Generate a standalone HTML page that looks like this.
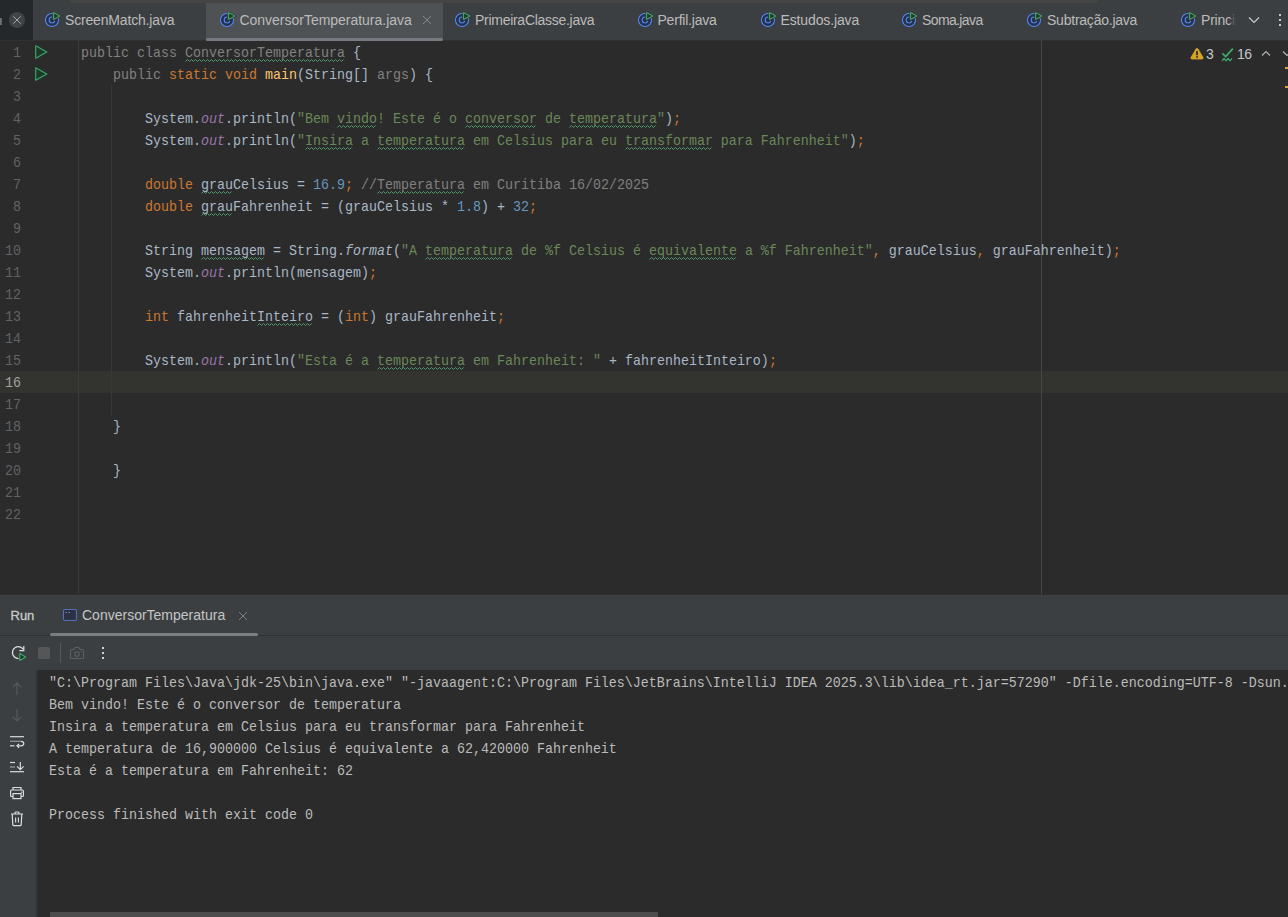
<!DOCTYPE html>
<html><head><meta charset="utf-8">
<style>
*{margin:0;padding:0;box-sizing:border-box}
html,body{width:1288px;height:917px;overflow:hidden;background:#2b2b2b}
body{position:relative;font-family:"Liberation Sans",sans-serif}
.a{position:absolute}
.tab{position:absolute;top:0;height:40px;font-size:14px;color:#bbbbbb;line-height:40px;white-space:nowrap}
.code{position:absolute;left:0;width:1288px;height:22px;font-family:"Liberation Mono",monospace;font-size:13.33px;line-height:22px;white-space:pre;color:#a9b7c6}
.ln{position:absolute;left:0;width:21px;text-align:right;color:#606366;transform:translateY(2px) scaleY(1.11);transform-origin:0 14.5px}
.tx{position:absolute;left:81px;top:0;transform:translateY(2px) scaleY(1.11);transform-origin:0 14.5px}
.k{color:#cc7832}.s{color:#6a8759}.n{color:#6897bb}.c{color:#808080}.f{color:#9876aa;font-style:italic}.m{color:#ffc66d}.g{color:#808080}
.i{font-style:italic}
.con{position:absolute;left:49px;font-family:"Liberation Mono",monospace;font-size:13.33px;line-height:22px;white-space:pre;color:#bbbbbb;transform:translateY(2px) scaleY(1.11);transform-origin:0 14.5px}
</style></head><body>

<div class="a" style="left:0;top:0;width:33px;height:40px;background:#25282a"></div>
<div class="a" style="left:33px;top:0;width:1255px;height:40px;background:#3c3f41"></div>
<div class="a" style="left:0;top:40px;width:1288px;height:554px;background:#2b2b2b"></div>
<div class="a" style="left:0;top:40px;width:1288px;height:1px;background:#32312e"></div>
<div class="a" style="left:70px;top:0;width:1028px;height:3px;background:#454643"></div>
<svg class="a" style="left:0;top:0" width="33" height="40"><circle cx="17" cy="20" r="8" fill="#414446"/><path d="M13.3 16.3 L20.7 23.7 M20.7 16.3 L13.3 23.7" stroke="#a3a5a7" stroke-width="1"/><rect x="0" y="18" width="1.8" height="7" fill="#7f8486" opacity="0.8"/></svg>
<div class="a" style="left:206px;top:3px;width:237px;height:37px;background:#4e5254"></div>
<div class="a" style="left:206px;top:38px;width:237px;height:3px;border-radius:1.5px;background:#747a80"></div>
<svg class="a" style="left:44px;top:12px" width="17" height="17"><circle cx="8" cy="8" r="6.55" fill="#26304a" stroke="#548af7" stroke-width="1.05"/><path d="M8 5.1 A2.9 2.9 0 1 0 10.8 9" fill="none" stroke="#548af7" stroke-width="1.05"/><path d="M9.5 0.3 L16.2 4 L9.5 7.7 Z" fill="#3c3f41" stroke="#3c3f41" stroke-width="2" stroke-linejoin="round"/><path d="M9.6 0.6 L15.8 4 L9.6 7.4 Z" fill="#1f3b29" stroke="#45b56e" stroke-width="1" stroke-linejoin="round"/></svg>
<div class="tab" style="left:65px;letter-spacing:-0.17px">ScreenMatch.java</div>
<svg class="a" style="left:218.5px;top:12px" width="17" height="17"><circle cx="8" cy="8" r="6.55" fill="#26304a" stroke="#548af7" stroke-width="1.05"/><path d="M8 5.1 A2.9 2.9 0 1 0 10.8 9" fill="none" stroke="#548af7" stroke-width="1.05"/><path d="M9.5 0.3 L16.2 4 L9.5 7.7 Z" fill="#3c3f41" stroke="#3c3f41" stroke-width="2" stroke-linejoin="round"/><path d="M9.6 0.6 L15.8 4 L9.6 7.4 Z" fill="#1f3b29" stroke="#45b56e" stroke-width="1" stroke-linejoin="round"/></svg>
<div class="tab" style="left:239.5px;letter-spacing:-0.02px">ConversorTemperatura.java</div>
<svg class="a" style="left:454px;top:12px" width="17" height="17"><circle cx="8" cy="8" r="6.55" fill="#26304a" stroke="#548af7" stroke-width="1.05"/><path d="M8 5.1 A2.9 2.9 0 1 0 10.8 9" fill="none" stroke="#548af7" stroke-width="1.05"/><path d="M9.5 0.3 L16.2 4 L9.5 7.7 Z" fill="#3c3f41" stroke="#3c3f41" stroke-width="2" stroke-linejoin="round"/><path d="M9.6 0.6 L15.8 4 L9.6 7.4 Z" fill="#1f3b29" stroke="#45b56e" stroke-width="1" stroke-linejoin="round"/></svg>
<div class="tab" style="left:475px;letter-spacing:-0.28px">PrimeiraClasse.java</div>
<svg class="a" style="left:636.5px;top:12px" width="17" height="17"><circle cx="8" cy="8" r="6.55" fill="#26304a" stroke="#548af7" stroke-width="1.05"/><path d="M8 5.1 A2.9 2.9 0 1 0 10.8 9" fill="none" stroke="#548af7" stroke-width="1.05"/><path d="M9.5 0.3 L16.2 4 L9.5 7.7 Z" fill="#3c3f41" stroke="#3c3f41" stroke-width="2" stroke-linejoin="round"/><path d="M9.6 0.6 L15.8 4 L9.6 7.4 Z" fill="#1f3b29" stroke="#45b56e" stroke-width="1" stroke-linejoin="round"/></svg>
<div class="tab" style="left:657.5px;letter-spacing:-0.22px">Perfil.java</div>
<svg class="a" style="left:759.5px;top:12px" width="17" height="17"><circle cx="8" cy="8" r="6.55" fill="#26304a" stroke="#548af7" stroke-width="1.05"/><path d="M8 5.1 A2.9 2.9 0 1 0 10.8 9" fill="none" stroke="#548af7" stroke-width="1.05"/><path d="M9.5 0.3 L16.2 4 L9.5 7.7 Z" fill="#3c3f41" stroke="#3c3f41" stroke-width="2" stroke-linejoin="round"/><path d="M9.6 0.6 L15.8 4 L9.6 7.4 Z" fill="#1f3b29" stroke="#45b56e" stroke-width="1" stroke-linejoin="round"/></svg>
<div class="tab" style="left:780.5px;letter-spacing:-0.13px">Estudos.java</div>
<svg class="a" style="left:901px;top:12px" width="17" height="17"><circle cx="8" cy="8" r="6.55" fill="#26304a" stroke="#548af7" stroke-width="1.05"/><path d="M8 5.1 A2.9 2.9 0 1 0 10.8 9" fill="none" stroke="#548af7" stroke-width="1.05"/><path d="M9.5 0.3 L16.2 4 L9.5 7.7 Z" fill="#3c3f41" stroke="#3c3f41" stroke-width="2" stroke-linejoin="round"/><path d="M9.6 0.6 L15.8 4 L9.6 7.4 Z" fill="#1f3b29" stroke="#45b56e" stroke-width="1" stroke-linejoin="round"/></svg>
<div class="tab" style="left:922px;letter-spacing:-0.62px">Soma.java</div>
<svg class="a" style="left:1026px;top:12px" width="17" height="17"><circle cx="8" cy="8" r="6.55" fill="#26304a" stroke="#548af7" stroke-width="1.05"/><path d="M8 5.1 A2.9 2.9 0 1 0 10.8 9" fill="none" stroke="#548af7" stroke-width="1.05"/><path d="M9.5 0.3 L16.2 4 L9.5 7.7 Z" fill="#3c3f41" stroke="#3c3f41" stroke-width="2" stroke-linejoin="round"/><path d="M9.6 0.6 L15.8 4 L9.6 7.4 Z" fill="#1f3b29" stroke="#45b56e" stroke-width="1" stroke-linejoin="round"/></svg>
<div class="tab" style="left:1047px;letter-spacing:-0.23px">Subtração.java</div>
<svg class="a" style="left:1180px;top:12px" width="17" height="17"><circle cx="8" cy="8" r="6.55" fill="#26304a" stroke="#548af7" stroke-width="1.05"/><path d="M8 5.1 A2.9 2.9 0 1 0 10.8 9" fill="none" stroke="#548af7" stroke-width="1.05"/><path d="M9.5 0.3 L16.2 4 L9.5 7.7 Z" fill="#3c3f41" stroke="#3c3f41" stroke-width="2" stroke-linejoin="round"/><path d="M9.6 0.6 L15.8 4 L9.6 7.4 Z" fill="#1f3b29" stroke="#45b56e" stroke-width="1" stroke-linejoin="round"/></svg>
<div class="tab" style="left:1201px;letter-spacing:-0.2px">Princip</div>
<svg class="a" style="left:422px;top:15px" width="10" height="10"><path d="M1 1 L9 9 M9 1 L1 9" stroke="#85888a" stroke-width="1"/></svg>
<div class="a" style="left:1230px;top:3px;width:6px;height:37px;background:linear-gradient(to right, rgba(60,63,65,0.3), #3c3f41)"></div>
<div class="a" style="left:1236px;top:3px;width:52px;height:37px;background:#3c3f41"></div>
<svg class="a" style="left:1246px;top:14px" width="16" height="12"><path d="M3 3.5 L8 8.5 L13 3.5" fill="none" stroke="#c9cacb" stroke-width="1.2"/></svg>
<svg class="a" style="left:1276px;top:12px" width="8" height="16"><rect x="3" y="2" width="2" height="2" fill="#c9cacb"/><rect x="3" y="7" width="2" height="2" fill="#c9cacb"/><rect x="3" y="12" width="2" height="2" fill="#c9cacb"/></svg>
<div class="a" style="left:0;top:371px;width:1288px;height:22px;background:#33332f"></div>
<div class="a" style="left:78px;top:40px;width:1px;height:554px;background:#3a3a3a"></div>
<div class="a" style="left:1041px;top:40px;width:1px;height:554px;background:#474747"></div>
<div class="a" style="left:111px;top:85px;width:1px;height:330px;background:#373737"></div>
<div class="code" style="top:41px"><span class="ln">1</span><span class="tx"><span class="g">public class ConversorTemperatura</span> {</span></div>
<div class="code" style="top:63px"><span class="ln">2</span><span class="tx">    <span class="g">public</span> <span class="k">static</span> <span class="k">void</span> <span class="m">main</span>(String[] <span class="g">args</span>) {</span></div>
<div class="code" style="top:85px"><span class="ln">3</span><span class="tx"></span></div>
<div class="code" style="top:107px"><span class="ln">4</span><span class="tx">        System.<span class="f">out</span>.println(<span class="s">&quot;Bem vindo! Este é o conversor de temperatura&quot;</span>)<span class="k">;</span></span></div>
<div class="code" style="top:129px"><span class="ln">5</span><span class="tx">        System.<span class="f">out</span>.println(<span class="s">&quot;Insira a temperatura em Celsius para eu transformar para Fahrenheit&quot;</span>)<span class="k">;</span></span></div>
<div class="code" style="top:151px"><span class="ln">6</span><span class="tx"></span></div>
<div class="code" style="top:173px"><span class="ln">7</span><span class="tx">        <span class="k">double</span> grauCelsius = <span class="n">16.9</span><span class="k">;</span><span class="c"> //Temperatura em Curitiba 16/02/2025</span></span></div>
<div class="code" style="top:195px"><span class="ln">8</span><span class="tx">        <span class="k">double</span> grauFahrenheit = (grauCelsius * <span class="n">1.8</span>) + <span class="n">32</span><span class="k">;</span></span></div>
<div class="code" style="top:217px"><span class="ln">9</span><span class="tx"></span></div>
<div class="code" style="top:239px"><span class="ln">10</span><span class="tx">        String mensagem = String.<span class="i">format</span>(<span class="s">&quot;A temperatura de %f Celsius é equivalente a %f Fahrenheit&quot;</span><span class="k">,</span> grauCelsius<span class="k">,</span> grauFahrenheit)<span class="k">;</span></span></div>
<div class="code" style="top:261px"><span class="ln">11</span><span class="tx">        System.<span class="f">out</span>.println(mensagem)<span class="k">;</span></span></div>
<div class="code" style="top:283px"><span class="ln">12</span><span class="tx"></span></div>
<div class="code" style="top:305px"><span class="ln">13</span><span class="tx">        <span class="k">int</span> fahrenheitInteiro = (<span class="k">int</span>) grauFahrenheit<span class="k">;</span></span></div>
<div class="code" style="top:327px"><span class="ln">14</span><span class="tx"></span></div>
<div class="code" style="top:349px"><span class="ln">15</span><span class="tx">        System.<span class="f">out</span>.println(<span class="s">&quot;Esta é a temperatura em Fahrenheit: &quot;</span> + fahrenheitInteiro)<span class="k">;</span></span></div>
<div class="code" style="top:371px"><span class="ln" style="color:#a4a3a3">16</span><span class="tx"></span></div>
<div class="code" style="top:393px"><span class="ln">17</span><span class="tx"></span></div>
<div class="code" style="top:415px"><span class="ln">18</span><span class="tx">    }</span></div>
<div class="code" style="top:437px"><span class="ln">19</span><span class="tx"></span></div>
<div class="code" style="top:459px"><span class="ln">20</span><span class="tx">    }</span></div>
<div class="code" style="top:481px"><span class="ln">21</span><span class="tx"></span></div>
<div class="code" style="top:503px"><span class="ln">22</span><span class="tx"></span></div>
<svg class="a" style="left:34px;top:44px" width="15" height="16"><path d="M1.7 1.8 L12.8 8 L1.7 14.2 Z" fill="#1c3a29" stroke="#3ca66a" stroke-width="1.15" stroke-linejoin="round"/></svg>
<svg class="a" style="left:34px;top:66px" width="15" height="16"><path d="M1.7 1.8 L12.8 8 L1.7 14.2 Z" fill="#1c3a29" stroke="#3ca66a" stroke-width="1.15" stroke-linejoin="round"/></svg>
<svg class="a" style="left:1189px;top:46px" width="16" height="15"><path d="M8 2.2 Q8.6 2.2 9 2.9 L14 11.4 Q14.6 12.9 13.2 13 L2.8 13 Q1.4 12.9 2 11.4 L7 2.9 Q7.4 2.2 8 2.2 Z" fill="#d4a52a" stroke="#d4a52a" stroke-width="0.8" stroke-linejoin="round"/><rect x="7.15" y="5" width="1.7" height="4.3" fill="#2b2b2b"/><rect x="7.15" y="10.2" width="1.7" height="1.6" fill="#2b2b2b"/></svg>
<div class="a" style="left:1206px;top:44px;font-size:14px;line-height:20px;color:#c4c6c8">3</div>
<svg class="a" style="left:1221px;top:47px" width="14" height="15"><path d="M1.4 6.4 L4.7 9.6 L11.8 1.6" fill="none" stroke="#3db06e" stroke-width="1.6"/><path d="M1 13.8 L3 11.4 L5 13.8 L7 11.4 L9 13.8 L11 11.4" fill="none" stroke="#3db06e" stroke-width="1.1"/></svg>
<div class="a" style="left:1237px;top:44px;font-size:14px;line-height:20px;letter-spacing:-0.6px;color:#c4c6c8">16</div>
<svg class="a" style="left:1260px;top:49px" width="12" height="9"><path d="M2 6.5 L6 2.5 L10 6.5" fill="none" stroke="#b4b6b8" stroke-width="1.1"/></svg>
<svg class="a" style="left:1281px;top:49px" width="7" height="9"><path d="M2 2.5 L6 6.5 L10 2.5" fill="none" stroke="#b4b6b8" stroke-width="1.1"/></svg>
<div class="a" style="left:1285px;top:67px;width:3px;height:2px;background:#d6a72a"></div>
<div class="a" style="left:1285px;top:86px;width:3px;height:2px;background:#d6a72a"></div>
<svg class="a" style="left:185.0px;top:58px" width="161.0" height="5"><polyline points="0.5,3.5 2.5,1.5 4.5,3.5 6.5,1.5 8.5,3.5 10.5,1.5 12.5,3.5 14.5,1.5 16.5,3.5 18.5,1.5 20.5,3.5 22.5,1.5 24.5,3.5 26.5,1.5 28.5,3.5 30.5,1.5 32.5,3.5 34.5,1.5 36.5,3.5 38.5,1.5 40.5,3.5 42.5,1.5 44.5,3.5 46.5,1.5 48.5,3.5 50.5,1.5 52.5,3.5 54.5,1.5 56.5,3.5 58.5,1.5 60.5,3.5 62.5,1.5 64.5,3.5 66.5,1.5 68.5,3.5 70.5,1.5 72.5,3.5 74.5,1.5 76.5,3.5 78.5,1.5 80.5,3.5 82.5,1.5 84.5,3.5 86.5,1.5 88.5,3.5 90.5,1.5 92.5,3.5 94.5,1.5 96.5,3.5 98.5,1.5 100.5,3.5 102.5,1.5 104.5,3.5 106.5,1.5 108.5,3.5 110.5,1.5 112.5,3.5 114.5,1.5 116.5,3.5 118.5,1.5 120.5,3.5 122.5,1.5 124.5,3.5 126.5,1.5 128.5,3.5 130.5,1.5 132.5,3.5 134.5,1.5 136.5,3.5 138.5,1.5 140.5,3.5 142.5,1.5 144.5,3.5 146.5,1.5 148.5,3.5 150.5,1.5 152.5,3.5 154.5,1.5 156.5,3.5 158.5,1.5" fill="none" stroke="#4f9c6c" stroke-width="1"/></svg>
<svg class="a" style="left:337.0px;top:124px" width="41.0" height="5"><polyline points="0.5,3.5 2.5,1.5 4.5,3.5 6.5,1.5 8.5,3.5 10.5,1.5 12.5,3.5 14.5,1.5 16.5,3.5 18.5,1.5 20.5,3.5 22.5,1.5 24.5,3.5 26.5,1.5 28.5,3.5 30.5,1.5 32.5,3.5 34.5,1.5 36.5,3.5 38.5,1.5" fill="none" stroke="#4f9c6c" stroke-width="1"/></svg>
<svg class="a" style="left:465.0px;top:124px" width="73.0" height="5"><polyline points="0.5,3.5 2.5,1.5 4.5,3.5 6.5,1.5 8.5,3.5 10.5,1.5 12.5,3.5 14.5,1.5 16.5,3.5 18.5,1.5 20.5,3.5 22.5,1.5 24.5,3.5 26.5,1.5 28.5,3.5 30.5,1.5 32.5,3.5 34.5,1.5 36.5,3.5 38.5,1.5 40.5,3.5 42.5,1.5 44.5,3.5 46.5,1.5 48.5,3.5 50.5,1.5 52.5,3.5 54.5,1.5 56.5,3.5 58.5,1.5 60.5,3.5 62.5,1.5 64.5,3.5 66.5,1.5 68.5,3.5 70.5,1.5" fill="none" stroke="#4f9c6c" stroke-width="1"/></svg>
<svg class="a" style="left:569.0px;top:124px" width="89.0" height="5"><polyline points="0.5,3.5 2.5,1.5 4.5,3.5 6.5,1.5 8.5,3.5 10.5,1.5 12.5,3.5 14.5,1.5 16.5,3.5 18.5,1.5 20.5,3.5 22.5,1.5 24.5,3.5 26.5,1.5 28.5,3.5 30.5,1.5 32.5,3.5 34.5,1.5 36.5,3.5 38.5,1.5 40.5,3.5 42.5,1.5 44.5,3.5 46.5,1.5 48.5,3.5 50.5,1.5 52.5,3.5 54.5,1.5 56.5,3.5 58.5,1.5 60.5,3.5 62.5,1.5 64.5,3.5 66.5,1.5 68.5,3.5 70.5,1.5 72.5,3.5 74.5,1.5 76.5,3.5 78.5,1.5 80.5,3.5 82.5,1.5 84.5,3.5 86.5,1.5" fill="none" stroke="#4f9c6c" stroke-width="1"/></svg>
<svg class="a" style="left:305.0px;top:146px" width="49.0" height="5"><polyline points="0.5,3.5 2.5,1.5 4.5,3.5 6.5,1.5 8.5,3.5 10.5,1.5 12.5,3.5 14.5,1.5 16.5,3.5 18.5,1.5 20.5,3.5 22.5,1.5 24.5,3.5 26.5,1.5 28.5,3.5 30.5,1.5 32.5,3.5 34.5,1.5 36.5,3.5 38.5,1.5 40.5,3.5 42.5,1.5 44.5,3.5 46.5,1.5" fill="none" stroke="#4f9c6c" stroke-width="1"/></svg>
<svg class="a" style="left:377.0px;top:146px" width="89.0" height="5"><polyline points="0.5,3.5 2.5,1.5 4.5,3.5 6.5,1.5 8.5,3.5 10.5,1.5 12.5,3.5 14.5,1.5 16.5,3.5 18.5,1.5 20.5,3.5 22.5,1.5 24.5,3.5 26.5,1.5 28.5,3.5 30.5,1.5 32.5,3.5 34.5,1.5 36.5,3.5 38.5,1.5 40.5,3.5 42.5,1.5 44.5,3.5 46.5,1.5 48.5,3.5 50.5,1.5 52.5,3.5 54.5,1.5 56.5,3.5 58.5,1.5 60.5,3.5 62.5,1.5 64.5,3.5 66.5,1.5 68.5,3.5 70.5,1.5 72.5,3.5 74.5,1.5 76.5,3.5 78.5,1.5 80.5,3.5 82.5,1.5 84.5,3.5 86.5,1.5" fill="none" stroke="#4f9c6c" stroke-width="1"/></svg>
<svg class="a" style="left:625.0px;top:146px" width="89.0" height="5"><polyline points="0.5,3.5 2.5,1.5 4.5,3.5 6.5,1.5 8.5,3.5 10.5,1.5 12.5,3.5 14.5,1.5 16.5,3.5 18.5,1.5 20.5,3.5 22.5,1.5 24.5,3.5 26.5,1.5 28.5,3.5 30.5,1.5 32.5,3.5 34.5,1.5 36.5,3.5 38.5,1.5 40.5,3.5 42.5,1.5 44.5,3.5 46.5,1.5 48.5,3.5 50.5,1.5 52.5,3.5 54.5,1.5 56.5,3.5 58.5,1.5 60.5,3.5 62.5,1.5 64.5,3.5 66.5,1.5 68.5,3.5 70.5,1.5 72.5,3.5 74.5,1.5 76.5,3.5 78.5,1.5 80.5,3.5 82.5,1.5 84.5,3.5 86.5,1.5" fill="none" stroke="#4f9c6c" stroke-width="1"/></svg>
<svg class="a" style="left:201.0px;top:190px" width="33.0" height="5"><polyline points="0.5,3.5 2.5,1.5 4.5,3.5 6.5,1.5 8.5,3.5 10.5,1.5 12.5,3.5 14.5,1.5 16.5,3.5 18.5,1.5 20.5,3.5 22.5,1.5 24.5,3.5 26.5,1.5 28.5,3.5 30.5,1.5" fill="none" stroke="#4f9c6c" stroke-width="1"/></svg>
<svg class="a" style="left:377.0px;top:190px" width="89.0" height="5"><polyline points="0.5,3.5 2.5,1.5 4.5,3.5 6.5,1.5 8.5,3.5 10.5,1.5 12.5,3.5 14.5,1.5 16.5,3.5 18.5,1.5 20.5,3.5 22.5,1.5 24.5,3.5 26.5,1.5 28.5,3.5 30.5,1.5 32.5,3.5 34.5,1.5 36.5,3.5 38.5,1.5 40.5,3.5 42.5,1.5 44.5,3.5 46.5,1.5 48.5,3.5 50.5,1.5 52.5,3.5 54.5,1.5 56.5,3.5 58.5,1.5 60.5,3.5 62.5,1.5 64.5,3.5 66.5,1.5 68.5,3.5 70.5,1.5 72.5,3.5 74.5,1.5 76.5,3.5 78.5,1.5 80.5,3.5 82.5,1.5 84.5,3.5 86.5,1.5" fill="none" stroke="#4f9c6c" stroke-width="1"/></svg>
<svg class="a" style="left:201.0px;top:212px" width="33.0" height="5"><polyline points="0.5,3.5 2.5,1.5 4.5,3.5 6.5,1.5 8.5,3.5 10.5,1.5 12.5,3.5 14.5,1.5 16.5,3.5 18.5,1.5 20.5,3.5 22.5,1.5 24.5,3.5 26.5,1.5 28.5,3.5 30.5,1.5" fill="none" stroke="#4f9c6c" stroke-width="1"/></svg>
<svg class="a" style="left:201.0px;top:256px" width="65.0" height="5"><polyline points="0.5,3.5 2.5,1.5 4.5,3.5 6.5,1.5 8.5,3.5 10.5,1.5 12.5,3.5 14.5,1.5 16.5,3.5 18.5,1.5 20.5,3.5 22.5,1.5 24.5,3.5 26.5,1.5 28.5,3.5 30.5,1.5 32.5,3.5 34.5,1.5 36.5,3.5 38.5,1.5 40.5,3.5 42.5,1.5 44.5,3.5 46.5,1.5 48.5,3.5 50.5,1.5 52.5,3.5 54.5,1.5 56.5,3.5 58.5,1.5 60.5,3.5 62.5,1.5" fill="none" stroke="#4f9c6c" stroke-width="1"/></svg>
<svg class="a" style="left:425.0px;top:256px" width="89.0" height="5"><polyline points="0.5,3.5 2.5,1.5 4.5,3.5 6.5,1.5 8.5,3.5 10.5,1.5 12.5,3.5 14.5,1.5 16.5,3.5 18.5,1.5 20.5,3.5 22.5,1.5 24.5,3.5 26.5,1.5 28.5,3.5 30.5,1.5 32.5,3.5 34.5,1.5 36.5,3.5 38.5,1.5 40.5,3.5 42.5,1.5 44.5,3.5 46.5,1.5 48.5,3.5 50.5,1.5 52.5,3.5 54.5,1.5 56.5,3.5 58.5,1.5 60.5,3.5 62.5,1.5 64.5,3.5 66.5,1.5 68.5,3.5 70.5,1.5 72.5,3.5 74.5,1.5 76.5,3.5 78.5,1.5 80.5,3.5 82.5,1.5 84.5,3.5 86.5,1.5" fill="none" stroke="#4f9c6c" stroke-width="1"/></svg>
<svg class="a" style="left:649.0px;top:256px" width="89.0" height="5"><polyline points="0.5,3.5 2.5,1.5 4.5,3.5 6.5,1.5 8.5,3.5 10.5,1.5 12.5,3.5 14.5,1.5 16.5,3.5 18.5,1.5 20.5,3.5 22.5,1.5 24.5,3.5 26.5,1.5 28.5,3.5 30.5,1.5 32.5,3.5 34.5,1.5 36.5,3.5 38.5,1.5 40.5,3.5 42.5,1.5 44.5,3.5 46.5,1.5 48.5,3.5 50.5,1.5 52.5,3.5 54.5,1.5 56.5,3.5 58.5,1.5 60.5,3.5 62.5,1.5 64.5,3.5 66.5,1.5 68.5,3.5 70.5,1.5 72.5,3.5 74.5,1.5 76.5,3.5 78.5,1.5 80.5,3.5 82.5,1.5 84.5,3.5 86.5,1.5" fill="none" stroke="#4f9c6c" stroke-width="1"/></svg>
<svg class="a" style="left:257.0px;top:322px" width="57.0" height="5"><polyline points="0.5,3.5 2.5,1.5 4.5,3.5 6.5,1.5 8.5,3.5 10.5,1.5 12.5,3.5 14.5,1.5 16.5,3.5 18.5,1.5 20.5,3.5 22.5,1.5 24.5,3.5 26.5,1.5 28.5,3.5 30.5,1.5 32.5,3.5 34.5,1.5 36.5,3.5 38.5,1.5 40.5,3.5 42.5,1.5 44.5,3.5 46.5,1.5 48.5,3.5 50.5,1.5 52.5,3.5 54.5,1.5" fill="none" stroke="#4f9c6c" stroke-width="1"/></svg>
<svg class="a" style="left:377.0px;top:366px" width="89.0" height="5"><polyline points="0.5,3.5 2.5,1.5 4.5,3.5 6.5,1.5 8.5,3.5 10.5,1.5 12.5,3.5 14.5,1.5 16.5,3.5 18.5,1.5 20.5,3.5 22.5,1.5 24.5,3.5 26.5,1.5 28.5,3.5 30.5,1.5 32.5,3.5 34.5,1.5 36.5,3.5 38.5,1.5 40.5,3.5 42.5,1.5 44.5,3.5 46.5,1.5 48.5,3.5 50.5,1.5 52.5,3.5 54.5,1.5 56.5,3.5 58.5,1.5 60.5,3.5 62.5,1.5 64.5,3.5 66.5,1.5 68.5,3.5 70.5,1.5 72.5,3.5 74.5,1.5 76.5,3.5 78.5,1.5 80.5,3.5 82.5,1.5 84.5,3.5 86.5,1.5" fill="none" stroke="#4f9c6c" stroke-width="1"/></svg>
<div class="a" style="left:0;top:594px;width:1288px;height:323px;background:#3c3f41"></div>
<div class="a" style="left:0;top:594px;width:1288px;height:1px;background:#31302d"></div>
<div class="a" style="left:37px;top:670px;width:1251px;height:247px;background:#2b2b2b"></div>
<div class="a" style="left:10.5px;top:605px;font-size:13px;line-height:22px;color:#c8cacc;-webkit-text-stroke:0.3px #c8cacc">Run</div>
<svg class="a" style="left:62px;top:608px" width="16" height="14"><rect x="1.5" y="1.5" width="13" height="11" rx="1.5" fill="#2c3244" stroke="#5270b8" stroke-width="1.1"/><rect x="3.5" y="4" width="1.5" height="1" fill="#6f88c8"/><rect x="6.5" y="4" width="1.5" height="1" fill="#6f88c8"/></svg>
<div class="a" style="left:82px;top:604px;font-size:14px;line-height:22px;color:#c3c5c7;white-space:nowrap">ConversorTemperatura</div>
<svg class="a" style="left:238px;top:611px" width="10" height="10"><path d="M1 1 L9 9 M9 1 L1 9" stroke="#7d8082" stroke-width="1"/></svg>
<div class="a" style="left:0;top:635px;width:1288px;height:1px;background:#2f3133"></div>
<div class="a" style="left:50px;top:633px;width:208px;height:3px;border-radius:1.5px;background:#7a7e83"></div>
<svg class="a" style="left:10px;top:644px" width="18" height="19"><path d="M13.2 5.2 A5.9 5.9 0 1 0 10.6 14" fill="none" stroke="#dfe1e3" stroke-width="1.3"/><path d="M13.8 2 L13.8 6.6 L9.4 6.6" fill="none" stroke="#dfe1e3" stroke-width="1.2"/><path d="M9.8 9.4 L15.3 13 L9.8 16.6 Z" fill="#3c3f41" stroke="#3c3f41" stroke-width="2.6" stroke-linejoin="round"/><path d="M9.8 9.6 L15.6 13 L9.8 16.4 Z" fill="#1c3a29" stroke="#3ca66a" stroke-width="1.15" stroke-linejoin="round"/></svg>
<div class="a" style="left:38px;top:647px;width:12px;height:12px;border-radius:1.5px;background:#555657"></div>
<div class="a" style="left:60px;top:643px;width:1px;height:20px;background:#55585a"></div>
<svg class="a" style="left:69px;top:646px" width="17" height="14"><path d="M1.5 4.5 Q1.5 3.5 2.5 3.5 L5 3.5 L6.3 1.5 L9.7 1.5 L11 3.5 L13.5 3.5 Q14.5 3.5 14.5 4.5 L14.5 11.5 Q14.5 12.5 13.5 12.5 L2.5 12.5 Q1.5 12.5 1.5 11.5 Z" fill="none" stroke="#5d6062" stroke-width="1.1"/><circle cx="8" cy="8" r="2.3" fill="none" stroke="#5d6062" stroke-width="1.1"/><rect x="11.6" y="5" width="1" height="1" fill="#5d6062"/></svg>
<svg class="a" style="left:100px;top:645px" width="6" height="16"><rect x="2" y="2" width="2" height="2" fill="#d0d2d4"/><rect x="2" y="7" width="2" height="2" fill="#d0d2d4"/><rect x="2" y="12" width="2" height="2" fill="#d0d2d4"/></svg>
<div class="a" style="left:36px;top:670px;width:2px;height:247px;background:#303132"></div>
<svg class="a" style="left:8px;top:680px" width="20" height="150"><path d="M9 3 L9 15 M4.8 7.2 L9 3 L13.2 7.2" fill="none" stroke="#595c5e" stroke-width="1.1"/><path d="M9 29 L9 41 M4.8 36.8 L9 41 L13.2 36.8" fill="none" stroke="#595c5e" stroke-width="1.1"/><path d="M2 56.7 L16 56.7" stroke="#dadcde" stroke-width="1.2"/><path d="M2 61.3 L13 61.3" stroke="#8c8f91" stroke-width="1.3"/><path d="M2 65.8 L6.5 65.8" stroke="#dadcde" stroke-width="1.2"/><path d="M13 61.3 Q15.8 61.3 15.8 63.6 Q15.8 65.8 13 65.8 L9 65.8 M11 63.8 L9 65.8 L11 67.8" fill="none" stroke="#dadcde" stroke-width="1.2"/><path d="M2 82.5 L7 82.5" stroke="#dadcde" stroke-width="1.2"/><path d="M2 87 L7 87" stroke="#8c8f91" stroke-width="1.5"/><path d="M2 91.7 L16 91.7" stroke="#dadcde" stroke-width="1.2"/><path d="M12.3 82 L12.3 89.5 M9 86.3 L12.3 89.6 L15.6 86.3" fill="none" stroke="#dadcde" stroke-width="1.2"/><path d="M5 110 L5 107.5 L13 107.5 L13 110" fill="none" stroke="#dadcde" stroke-width="1.2"/><path d="M5 116.5 L3.6 116.5 Q2.6 116.5 2.6 115.5 L2.6 111 Q2.6 110 3.6 110 L14.4 110 Q15.4 110 15.4 111 L15.4 115.5 Q15.4 116.5 14.4 116.5 L13 116.5" fill="none" stroke="#dadcde" stroke-width="1.2"/><rect x="5" y="113.6" width="8" height="5" fill="none" stroke="#dadcde" stroke-width="1.2"/><rect x="13" y="111.6" width="1.2" height="1.2" fill="#dadcde"/><path d="M3 134 L15 134 M7 134 L7 132.8 Q7 132 8 132 L10 132 Q11 132 11 132.8 L11 134" fill="none" stroke="#dadcde" stroke-width="1.2"/><path d="M4.2 134 L4.8 144.6 Q4.9 145.6 5.9 145.6 L12.1 145.6 Q13.1 145.6 13.2 144.6 L13.8 134" fill="none" stroke="#dadcde" stroke-width="1.2"/><path d="M7.6 137.5 L7.6 142.5 M10.4 137.5 L10.4 142.5" stroke="#dadcde" stroke-width="1.1"/></svg>
<div class="a" style="left:50px;top:912px;width:608px;height:5px;background:#4d4d4d"></div>
<div class="con" style="top:671px">&quot;C:\Program Files\Java\jdk-25\bin\java.exe&quot; &quot;-javaagent:C:\Program Files\JetBrains\IntelliJ IDEA 2025.3\lib\idea_rt.jar=57290&quot; -Dfile.encoding=UTF-8 -Dsun.stdout.encoding=UTF-8</div>
<div class="con" style="top:693px">Bem vindo! Este é o conversor de temperatura</div>
<div class="con" style="top:715px">Insira a temperatura em Celsius para eu transformar para Fahrenheit</div>
<div class="con" style="top:737px">A temperatura de 16,900000 Celsius é equivalente a 62,420000 Fahrenheit</div>
<div class="con" style="top:759px">Esta é a temperatura em Fahrenheit: 62</div>
<div class="con" style="top:781px"></div>
<div class="con" style="top:803px">Process finished with exit code 0</div>
</body></html>
